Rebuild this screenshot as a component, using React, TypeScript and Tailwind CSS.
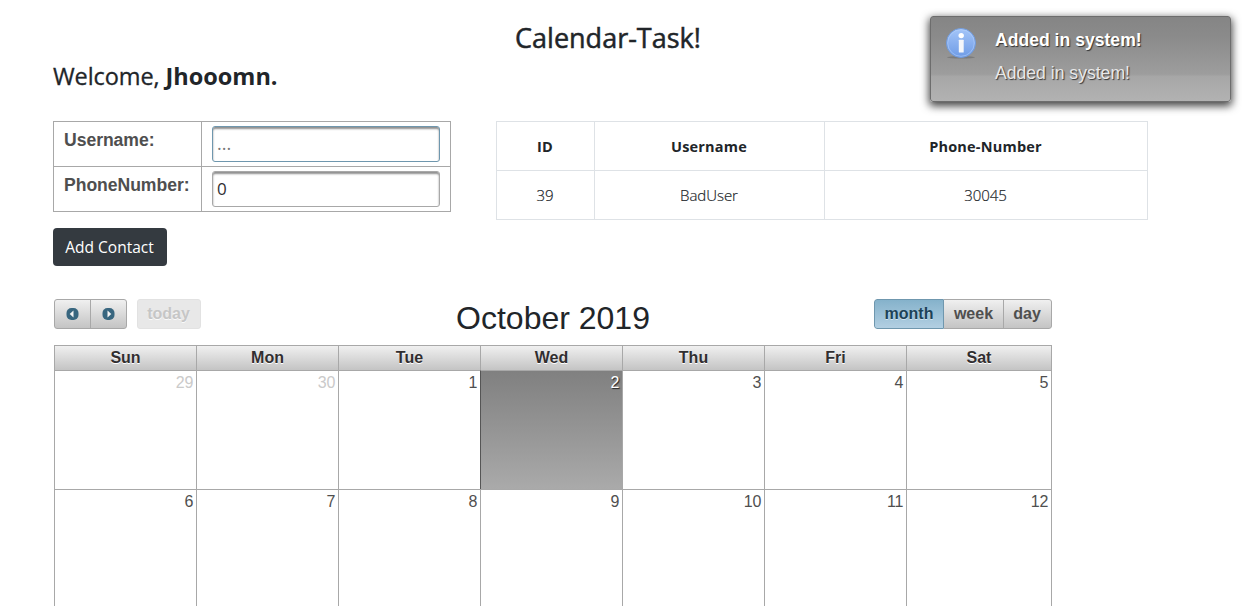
import type { ReactNode } from "react";

const segoe = "font-['Open_Sans','Noto_Sans',sans-serif]";
const raised = "bg-linear-to-b from-[#f0f0f0] to-[#c4c4c4] border-[#a8a8a8]";

const weekdays = ["Sun", "Mon", "Tue", "Wed", "Thu", "Fri", "Sat"];
const weeks = [
  [29, 30, 1, 2, 3, 4, 5],
  [6, 7, 8, 9, 10, 11, 12],
];

function Arrow({ flip = false }: { flip?: boolean }) {
  return (
    <svg width="13" height="12" viewBox="0 0 13 12" className="mr-px">
      <rect x=".5" width="12" height="12" rx="5" fill="#38667f" />
      <path d={flip ? "M5.500 2.500v7L9.300 6z" : "M7.500 2.500v7L3.700 6z"} fill="#f4f4f4" />
    </svg>
  );
}

function FormRow({ label, children }: { label: string; children: ReactNode }) {
  return (
    <div className="flex h-[45px] border-b border-[#a8a8a8]">
      <div className="w-[148px] border-r border-[#a8a8a8] pt-[6px] pl-[10px] text-[17.6px] leading-6 font-bold tracking-[-0.05px] text-[#4f4f4f]">
        {label}
      </div>
      <div className="pt-[4px] pl-[10px]">{children}</div>
    </div>
  );
}

function Toast() {
  return (
    <div className="absolute top-[16px] left-[930px] flex h-[86px] w-[301px] rounded-[3px] border border-[#6d6d6d] bg-[linear-gradient(to_bottom,#858585_0,#8b8b8b_25%,#9d9d9d_68%,#a7a7a7_71%,#b2b2b2_100%)] pt-[11px] pl-[15px] text-white shadow-[0_3px_8px_1px_rgba(0,0,0,0.75)]">
      <svg width="31" height="32" viewBox="0 0 31 32">
        <defs>
          <linearGradient id="info" x1="0" y1="0" x2="0" y2="1">
            <stop offset="0" stopColor="#a4c5f8" />
            <stop offset="1" stopColor="#6e9be6" />
          </linearGradient>
        </defs>
        <ellipse cx="15" cy="29.300" rx="14" ry="1.200" fill="#555" opacity=".4" />
        <circle cx="15" cy="15" r="14.500" fill="url(#info)" stroke="#719bdc" />
        <circle cx="15" cy="15" r="13.300" fill="none" stroke="#b5d0fa" strokeWidth=".8" opacity=".7" />
        <circle cx="15.200" cy="7.600" r="2.700" fill="#fff" />
        <rect x="12.800" y="11.800" width="4.900" height="12.700" rx=".5" fill="#f4f6fa" />
      </svg>
      <div className="ml-[18px] -mt-px text-[17.6px] leading-[26px] [text-shadow:1px_1px_1px_#333]">
        <div className="font-bold">Added in system!</div>
        <div className="mt-[7px] text-[#e8e8e8]">Added in system!</div>
      </div>
    </div>
  );
}

export default function App() {
  return (
    <div className="relative h-[606px] w-[1247px] overflow-hidden bg-white pl-[53px] font-['Liberation_Sans',Arial,sans-serif] text-base text-[#212529]">
      <h1 className={`h-[59px] w-[1110px] pt-[18px] text-center text-[27px] leading-[40px] [-webkit-text-stroke:0.5px_#212529] ${segoe}`}>
        Calendar-Task!
      </h1>
      <h2 className={`h-[62px] text-[23.5px] leading-[34px] ${segoe}`}>
        <span className="tracking-[-0.1px] [-webkit-text-stroke:0.3px_#212529]">Welcome, </span>
        <b>Jhooomn.</b>
      </h2>

      <div className="flex h-[178px] gap-[45px]">
        <div className="w-[398px]">
          <div className="border-x border-t border-[#a8a8a8]">
            <FormRow label="Username:">
              <input
                placeholder="..."
                className={`h-[36px] w-[228px] rounded-[3px] border border-[#6f97ae] px-1 pb-[3px] text-[18px] text-[#4f4f4f] shadow-[inset_0_2px_2px_#8f8f8f] outline-none placeholder:text-[#777] ${segoe}`}
              />
            </FormRow>
            <FormRow label="PhoneNumber:">
              <input
                defaultValue="0"
                className={`h-[36px] w-[228px] rounded-[3px] border border-[#a8a8a8] px-1 pb-[2px] text-[17px] text-[#312e30] shadow-[inset_0_2px_2px_#8f8f8f] outline-none ${segoe}`}
              />
            </FormRow>
          </div>
          <button className={`mt-4 h-[38px] w-[114px] rounded-[4px] bg-[#343a40] pt-px pr-px text-[15.5px] text-white ${segoe}`}>
            Add Contact
          </button>
        </div>

        <div className={`grid h-[99px] w-[652px] grid-cols-[98px_230px_324px] grid-rows-[49px_49px] border-t border-[#dee2e6] ${segoe}`}>
          {[
            ["ID", "Username", "Phone-Number"],
            ["39", "BadUser", "30045"],
          ].map((row, r) =>
            row.map((text, c) => (
              <div
                key={text}
                className={`flex items-center justify-center border-b border-l border-[#dee2e6] pt-px pr-px ${c === 2 ? "border-r" : ""} ${r === 0 ? "text-[14.5px] font-bold tracking-[0.2px]" : "text-[15px] font-light tracking-[-0.05px] [-webkit-text-stroke:0.2px_#212529]"}`}
              >
                {text}
              </div>
            )),
          )}
        </div>
      </div>

      <div className="ml-px w-[998px]">
        <div className="grid h-[46px] grid-cols-[1fr_auto_1fr] items-start">
          <div className="flex gap-[10px]">
            <div className={`flex h-[30px] w-[73px] rounded-[3px] border ${raised}`}>
              <button className="flex w-[36px] items-center justify-center border-r border-[#a8a8a8]">
                <Arrow />
              </button>
              <button className="flex flex-1 items-center justify-center">
                <Arrow flip />
              </button>
            </div>
            <button className="h-[30px] w-[64px] rounded-[3px] border border-[#e2e2e2] bg-[#e8e8e8] pr-px font-bold text-[#c6c6c6] [text-shadow:0_1px_0_#fafafa]">
              today
            </button>
          </div>
          <h2 className="-mt-px pt-[1px] text-[32px] leading-[38px]">October 2019</h2>
          <div className="flex h-[30px] w-[178px] justify-self-end overflow-hidden rounded-[3px] font-bold text-[#4f4f4f] [text-shadow:0_1px_0_#fff]">
            <button className="w-[70px] rounded-l-[3px] border border-[#6f97ae] bg-linear-to-b from-[#85b2cb] to-[#b2cfe2] text-[#1c4257] [text-shadow:0_1px_0_#cfe3ef]">
              month
            </button>
            <button className={`w-[60px] border-y border-r ${raised}`}>week</button>
            <button className={`flex-1 rounded-r-[3px] border-y border-r pr-px ${raised}`}>day</button>
          </div>
        </div>

        <div className="grid grid-cols-[repeat(6,142px)_146px] grid-rows-[25px_119px_119px]">
          {weekdays.map((day, i) => (
            <div
              key={day}
              className={`border-t border-l text-center leading-[23px] font-bold text-[#312e30] [text-shadow:0_1px_0_#fff] ${raised} ${i === 6 ? "border-r" : ""}`}
            >
              {day}
            </div>
          ))}
          {weeks.map((week, w) =>
            week.map((date, i) => {
              const today = date === 2;
              const outside = date > 12;
              return (
                <div
                  key={`${w}-${date}`}
                  className={`border-t border-l border-t-[#a8a8a8] pr-[2.5px] text-right leading-[23px] ${i === 6 ? "border-r border-r-[#a8a8a8]" : ""} ${
                    today
                      ? "border-l-[#555] bg-linear-to-b from-[#808080] to-[#aaaaaa] text-white [text-shadow:1px_1px_1px_#222]"
                      : outside
                        ? "border-l-[#a8a8a8] text-[#cacaca]"
                        : "border-l-[#a8a8a8] text-[#4f4f4f]"
                  }`}
                >
                  {date}
                </div>
              );
            }),
          )}
        </div>
      </div>

      <Toast />
    </div>
  );
}
